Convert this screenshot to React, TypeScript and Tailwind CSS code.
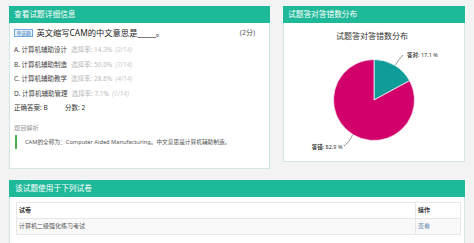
export default function App() {
  const options = [
    { k: "A", t: "计算机辅助设计", r: "14.3%", c: "(2/14)" },
    { k: "B", t: "计算机辅助制造", r: "50.0%", c: "(7/14)" },
    { k: "C", t: "计算机辅助教学", r: "28.6%", c: "(4/14)" },
    { k: "D", t: "计算机辅助管理", r: "7.1%", c: "(1/14)" },
  ];
  return (
    <div className="w-[474px] h-[243px] overflow-hidden bg-[#f3f3f4] pt-[6px] px-[9px] font-['Noto_Sans','Noto_Sans_CJK_SC',sans-serif] text-[#333]">
      <div className="flex items-start gap-[13px]">
        {/* Left panel */}
        <div className="w-[261px] flex flex-col">
          <div className="h-[17px] bg-[#1eb998] text-white text-[7.7px] leading-[17px] pl-[5px]">查看试题详细信息</div>
          <div className="h-[146px] bg-white border-x border-b border-[#cfe8e3] pl-[4px] pr-[14px] pt-[4px]">
            <div className="h-[12px] flex items-center justify-between">
              <div className="flex items-center gap-[3px]">
                <span className="h-[8px] px-[1.5px] border border-[#6ea6dc] bg-[#e4f0fc] text-[#3d7fc2] text-[4.8px] leading-[6px] flex items-center">单选题</span>
                <span className="text-[8.3px] leading-[12px] text-[#222]">英文缩写CAM的中文意思是_____。</span>
              </div>
              <span className="text-[7px] text-[#555]">(2分)</span>
            </div>
            <div className="mt-[4px]">
              {options.map((o) => (
                <div key={o.k} className="h-[14.5px] flex items-center text-[6.5px] whitespace-nowrap">
                  <span className="text-[#444]">{o.k}. {o.t}</span>
                  <span className="ml-[4px] text-[#bbb]">选择率: {o.r}</span>
                  <span className="ml-[3px] text-[#ccc] italic">{o.c}</span>
                </div>
              ))}
            </div>
            <div className="mt-[1px] h-[12px] flex items-center text-[6.5px] text-[#333]">
              <span className="w-[51px]">正确答案: B</span>
              <span>分数: 2</span>
            </div>
            <div className="mt-[9px] h-[10px] flex items-center text-[6.2px] text-[#999]">题目解析</div>
            <div className="mt-[2px] ml-[1px] h-[14px] border-l-[2px] border-[#4caf50] pl-[8px] flex items-center text-[5.7px] text-[#555] whitespace-nowrap">
              CAM的全称为：Computer Aided Manufacturing。中文意思是计算机辅助制造。
            </div>
          </div>
        </div>
        {/* Right panel */}
        <div className="w-[182px] flex flex-col">
          <div className="h-[17px] bg-[#1eb998] text-white text-[7.7px] leading-[17px] pl-[5px]">试题答对答错数分布</div>
          <div className="h-[139px] bg-white border-x border-b border-[#cfe8e3] pt-[8px] flex flex-col items-center">
            <div className="text-[8px] leading-[10px] text-[#333] pr-[4px]">试题答对答错数分布</div>
            <svg width="180" height="120" viewBox="0 0 180 120" className="block">
              <path d="M90,59 L90,18.5 A40.5,40.5 0 0 1 125.6,39.7 Z" fill="#109d9a" stroke="#fff" strokeWidth="0.7" />
              <path d="M90,59 L125.6,39.7 A40.5,40.5 0 1 1 90,18.5 Z" fill="#d1006a" stroke="#fff" strokeWidth="0.7" />
              <path d="M111.5,24 Q115,18 119,14" fill="none" stroke="#555" strokeWidth="0.6" />
              <text x="123" y="15.5" fontSize="5.5" fill="#333">
                <tspan fontWeight="bold">答对</tspan>: 17.1 %
              </text>
              <path d="M68.5,94 Q66,101 60,105" fill="none" stroke="#555" strokeWidth="0.6" />
              <text x="58.5" y="108" fontSize="5.5" fill="#333" textAnchor="end">
                <tspan fontWeight="bold">答错</tspan>: 82.9 %
              </text>
            </svg>
          </div>
        </div>
      </div>
      {/* Bottom panel */}
      <div className="mt-[11px] flex flex-col">
        <div className="h-[17px] bg-[#1eb998] text-white text-[7.7px] leading-[17px] pl-[6px]">该试题使用于下列试卷</div>
        <div className="h-[60px] bg-white border-x border-[#cfe8e3] pl-[6px] pr-[3px] pt-[5px]">
          <div className="border border-[#e7e7e7] text-[6px]">
            <div className="h-[16px] flex border-b border-[#e7e7e7] bg-white font-bold text-[#333]">
              <div className="flex-1 flex items-center pl-[2px]">试卷</div>
              <div className="w-[45px] border-l border-[#e7e7e7] flex items-center pl-[2px]">操作</div>
            </div>
            <div className="h-[15px] flex bg-[#f9f9f9] text-[#555]">
              <div className="flex-1 flex items-center pl-[2px]">计算机二级强化练习考试</div>
              <div className="w-[45px] border-l border-[#e7e7e7] flex items-center pl-[2px] text-[#6d8fb4]">查看</div>
            </div>
          </div>
        </div>
      </div>
    </div>
  );
}
